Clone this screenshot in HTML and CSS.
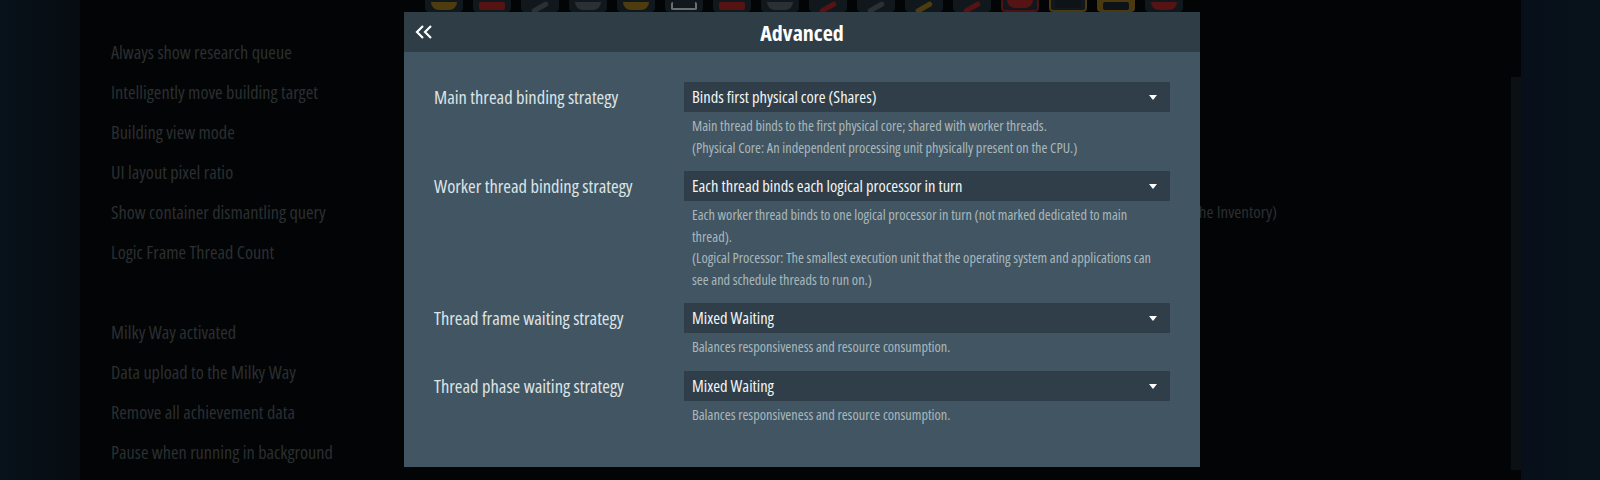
FILE: index.html
```html
<!DOCTYPE html>
<html lang="en">

<head>
    <meta charset="UTF-8">
    <meta name="viewport" content="width=device-width, initial-scale=1.0">
    <title>Settings - Advanced</title>

    <link rel="stylesheet" href="styles.css">
</head>

<body>
    <!-- Top toolbar (behind the dialog) -->
    <div class="toolbar">
        <div class="tile"><span class="shape s-yellow round"></span></div>
        <div class="tile"><span class="shape s-red"></span></div>
        <div class="tile"><span class="shape s-gray stripe"></span></div>
        <div class="tile"><span class="shape s-gray round"></span></div>
        <div class="tile"><span class="shape s-yellow round"></span></div>
        <div class="tile"><span class="shape s-white outline"></span></div>
        <div class="tile"><span class="shape s-red"></span></div>
        <div class="tile"><span class="shape s-gray round"></span></div>
        <div class="tile"><span class="shape s-red stripe"></span></div>
        <div class="tile"><span class="shape s-gray stripe"></span></div>
        <div class="tile"><span class="shape s-yellow stripe"></span></div>
        <div class="tile"><span class="shape s-red stripe"></span></div>
        <div class="tile red-frame"><span class="shape s-red round"></span></div>
        <div class="tile yellow-frame"><span class="shape s-dark"></span></div>
        <div class="tile yellow-fill"><span class="shape s-dark"></span></div>
        <div class="tile"><span class="shape s-red round"></span></div>
    </div>

    <!-- Settings page -->
    <div class="settings">
        <div class="setting-row">Always show research queue</div>
        <div class="setting-row">Intelligently move building target</div>
        <div class="setting-row">Building view mode</div>
        <div class="setting-row">UI layout pixel ratio</div>
        <div class="setting-row">
            <span>Show container dismantling query</span>
            <span class="setting-value">the Inventory)</span>
        </div>
        <div class="setting-row">Logic Frame Thread Count</div>
        <div class="setting-row"></div>
        <div class="setting-row">Milky Way activated</div>
        <div class="setting-row">Data upload to the Milky Way</div>
        <div class="setting-row">Remove all achievement data</div>
        <div class="setting-row">Pause when running in background</div>
    </div>
    <div class="scrollbar"></div>

    <!-- Advanced dialog -->
    <div class="overlay">
        <div class="dialog">
            <div class="dialog-header">
                <button class="back-btn">
                    <svg width="20" height="14" viewBox="0 0 20 14">
                        <polyline points="9,1 3,7 9,13" fill="none" stroke="#fff" stroke-width="2.2"/>
                        <polyline points="17,1 11,7 17,13" fill="none" stroke="#fff" stroke-width="2.2"/>
                    </svg>
                </button>
                <h2>Advanced</h2>
            </div>

            <div class="dialog-body">
                <div class="option">
                    <p class="option-label">Main thread binding strategy</p>
                    <div class="option-control">
                        <div class="dropdown">Binds first physical core (Shares)</div>
                        <div class="option-desc">
                            <p>Main thread binds to the first physical core; shared with worker threads.</p>
                            <p>(Physical Core: An independent processing unit physically present on the CPU.)</p>
                        </div>
                    </div>
                </div>

                <div class="option">
                    <p class="option-label">Worker thread binding strategy</p>
                    <div class="option-control">
                        <div class="dropdown">Each thread binds each logical processor in turn</div>
                        <div class="option-desc">
                            <p>Each worker thread binds to one logical processor in turn (not marked dedicated to main thread).</p>
                            <p>(Logical Processor: The smallest execution unit that the operating system and applications can see and schedule threads to run on.)</p>
                        </div>
                    </div>
                </div>

                <div class="option">
                    <p class="option-label">Thread frame waiting strategy</p>
                    <div class="option-control">
                        <div class="dropdown">Mixed Waiting</div>
                        <div class="option-desc">
                            <p>Balances responsiveness and resource consumption.</p>
                        </div>
                    </div>
                </div>

                <div class="option">
                    <p class="option-label">Thread phase waiting strategy</p>
                    <div class="option-control">
                        <div class="dropdown">Mixed Waiting</div>
                        <div class="option-desc">
                            <p>Balances responsiveness and resource consumption.</p>
                        </div>
                    </div>
                </div>
            </div>
        </div>
    </div>
</body>

</html>
```

FILE: styles.css
```css
/* Reset */
* {
    margin: 0;
    padding: 0;
    box-sizing: border-box;
}

/* Open Sans ships a condensed (75%) face, used everywhere */
body {
    width: 1600px;
    height: 480px;
    overflow: hidden;
    position: relative;
    font-family: 'Open Sans', 'DejaVu Sans Condensed', sans-serif;
    font-stretch: 75%;
    background: linear-gradient(to right,
            #08121a 0, #060c11 80px,
            #030405 80px, #030405 1521px,
            #07101a 1521px, #08121a 1600px);
}

/* Toolbar along the top edge */
.toolbar {
    display: flex;
    gap: 10px;
    height: 12px;
    overflow: hidden;
    padding-left: 425px;
    align-items: flex-end;
}

.toolbar .tile {
    flex: none;
    width: 38px;
    height: 40px;
    border-radius: 4px;
    background: #11181d;
    display: flex;
    justify-content: center;
    align-items: flex-end;
    padding-bottom: 2px;
}

.toolbar .tile.red-frame {
    border: 2px solid #4a1212;
}

.toolbar .tile.yellow-frame {
    border: 2px solid #4a3a10;
}

.toolbar .tile.yellow-fill {
    background: #4a3a10;
}

.toolbar .shape {
    width: 26px;
    height: 8px;
    border-radius: 2px;
}

.toolbar .shape.round {
    border-radius: 0 0 14px 14px;
}

.toolbar .shape.stripe {
    width: 18px;
    height: 5px;
    transform: rotate(-30deg);
}

.toolbar .shape.outline {
    background: transparent;
    border: 2px solid #6a6f72;
    border-top: none;
}

.s-yellow { background: #4d3d0e; }
.s-red { background: #561313; }
.s-gray { background: #2a3035; }
.s-white { background: #5d6265; }
.s-dark { background: #0e1317; }

/* Dimmed settings list */
.settings {
    padding: 20px 0 0 111px;
    width: 1277px;
    font-size: 18.3px;
    color: #2b2f31;
}

.setting-row {
    height: 40px;
    line-height: 40px;
    display: flex;
    justify-content: space-between;
}

.setting-value {
    font-size: 17px;
}

.scrollbar {
    position: absolute;
    left: 1511px;
    top: 77px;
    width: 10px;
    height: 393px;
    background: #0b1014;
}

/* Overlay + dialog */
.overlay {
    position: absolute;
    inset: 0;
    display: flex;
    justify-content: center;
    padding: 12px 0 0 4px;
}

.dialog {
    width: 796px;
    height: 455px;
    background: #415662;
    display: flex;
    flex-direction: column;
}

.dialog-header {
    height: 40px;
    background: #2f3d46;
    display: flex;
    align-items: center;
    justify-content: center;
    position: relative;
}

.dialog-header h2 {
    color: #fff;
    font-size: 22px;
    font-weight: 700;
}

.back-btn {
    position: absolute;
    left: 10px;
    top: 13px;
    background: none;
    border: none;
    cursor: pointer;
    display: flex;
}

.dialog-body {
    padding: 30px 30px 0 30px;
}

.option {
    display: flex;
    margin-bottom: 13px;
}

.option-label {
    width: 250px;
    flex: none;
    line-height: 30px;
    font-size: 18.5px;
    color: #dde3e6;
}

.option-control {
    flex: 1;
}

.dropdown {
    height: 30px;
    line-height: 30px;
    background: #2f3e48;
    color: #f2f5f6;
    font-size: 16.5px;
    padding: 0 8px;
    position: relative;
    cursor: pointer;
}

/* caret */
.dropdown::after {
    content: "";
    position: absolute;
    right: 13px;
    top: 13px;
    border-left: 4px solid transparent;
    border-right: 4px solid transparent;
    border-top: 5px solid #fff;
}

.option-desc {
    padding: 3px 4px 0 8px;
    font-size: 14.3px;
    line-height: 21.5px;
    color: #aab6bd;
}
```
